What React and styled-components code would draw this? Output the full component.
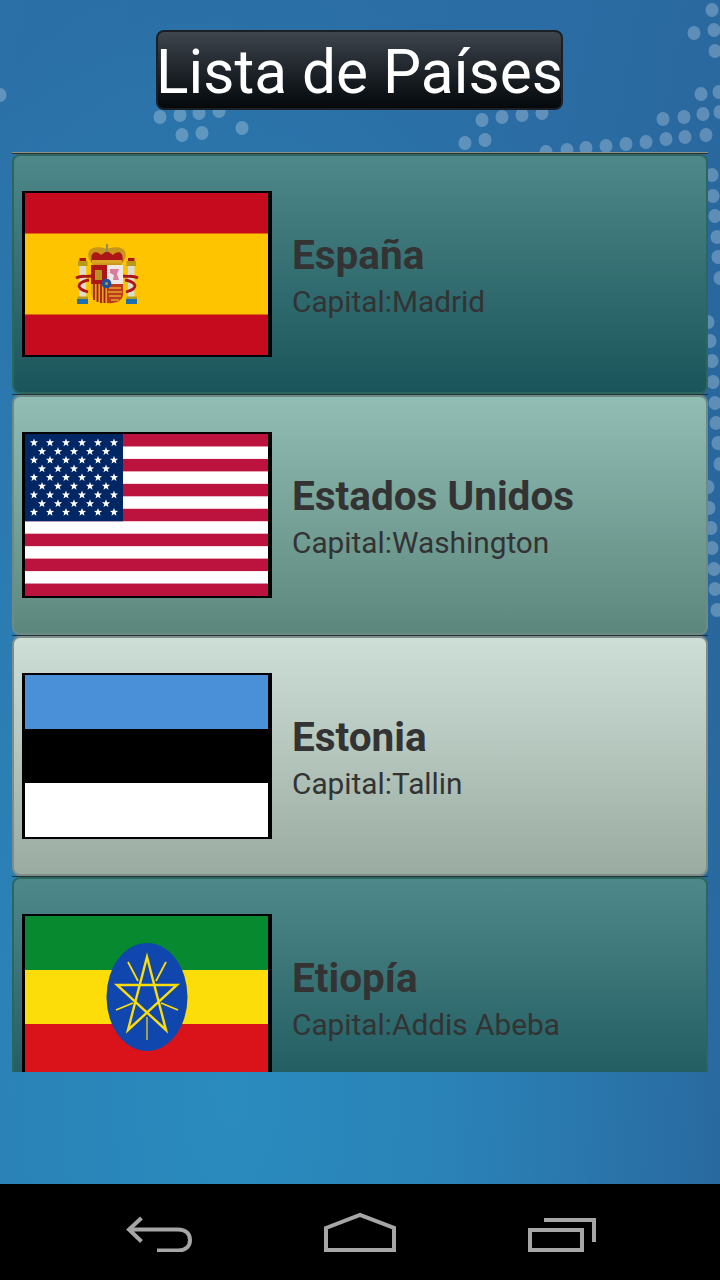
import React from "react";
import styled, { createGlobalStyle } from "styled-components";

const Global = createGlobalStyle`
  html, body { margin: 0; padding: 0; background: #000; }
  body { font-family: Roboto, "Liberation Sans", sans-serif; }
`;

const Page = styled.div`
  position: relative;
  width: 720px;
  height: 1280px;
  display: flex;
  flex-direction: column;
  overflow: hidden;
`;

const Screen = styled.main`
  position: relative;
  height: 1184px;
  display: flex;
  flex-direction: column;
  align-items: center;
  padding-top: 30px;
  box-sizing: border-box;
  background:
    radial-gradient(ellipse 540px 1150px at 230px 1090px, #2a8bbe 0%, #2a84b8 35%, rgba(42, 110, 165, 0) 100%),
    linear-gradient(100deg, #2b70a7 0%, #2a6ca3 60%, #28659c 100%);
`;

const Dots = styled.svg`
  position: absolute;
  inset: 0;
`;

const Title = styled.h1`
  position: relative;
  margin: 0 1px 0 0;
  width: 407px;
  height: 80px;
  padding-top: 3px;
  box-sizing: border-box;
  border: 2px solid #1b2026;
  border-radius: 8px;
  background: linear-gradient(#40464e 0%, #2b3138 30%, #14191e 70%, #04090c 100%);
  color: #fff;
  font-size: 60.4px;
  font-weight: 400;
  line-height: 76px;
  text-align: center;
  text-indent: -2px;
  white-space: nowrap;
`;

const List = styled.section`
  position: relative;
  width: 696px;
  height: 920px;
  margin-top: 42px;
  flex: none;
  overflow: hidden;
  border-top: 1px solid #8d9484;
  box-sizing: border-box;
`;

const Item = styled.article`
  border-top: 1px solid #24333a;
  height: 241px;
  box-sizing: border-box;
`;

const tones = {
  deep: { top: "#4f888a", bottom: "#19555a", edge: "#2b675f" },
  mid: { top: "#92bdb4", bottom: "#5c877d", edge: "#6e8a85" },
  pale: { top: "#cddfd7", bottom: "#9aaba1", edge: "#7f8d89" },
};

const Card = styled.div`
  height: 240px;
  box-sizing: border-box;
  display: flex;
  align-items: center;
  padding-left: 8px;
  border: 2px solid ${(p) => tones[p.$tone].edge};
  border-radius: 8px;
  background: linear-gradient(${(p) => tones[p.$tone].top}, ${(p) => tones[p.$tone].bottom});
`;

const FlagFrame = styled.div`
  flex: none;
  width: 250px;
  height: 166px;
  box-sizing: border-box;
  border-style: solid;
  border-color: #000;
  border-width: 2px 4px 2px 3px;
  background: #fff;
  display: flex;
  flex-direction: column;
  svg { display: block; }
`;

const Band = styled.div`
  flex: 1;
  background: ${(p) => p.$color};
`;

const Info = styled.div`
  margin-left: 20px;
  padding-top: 2px;
  display: flex;
  flex-direction: column;
  gap: 5px;
  color: #333;
`;

const Name = styled.h2`
  margin: 0;
  font-size: 40.5px;
  line-height: 47px;
  font-weight: 700;
`;

const Capital = styled.p`
  margin: 0;
  font-size: 29.8px;
  line-height: 35px;
  font-weight: 400;
`;

const NavBar = styled.nav`
  height: 96px;
  background: #000;
  display: flex;
  align-items: center;
  justify-content: center;
  gap: 132px;
  padding-left: 2px;
`;

const NavIcon = styled.svg`
  fill: none;
  stroke: #a6a6a6;
  stroke-width: 4;
`;

const dotList = [
  [160,117],[180,115],[199,113],[219,111],[182,135],[202,133],[242,128],
  [482,120],[502,117],[522,115],[542,113],[465,143],[485,140],
  [663,119],[684,117],[703,114],[720,112],[685,137],[706,135],[666,139],[646,142],[626,144],[606,146],[586,148],[567,150],[546,152],
  [701,94],[719,92],[0,95],[712,10],[694,33],[714,30],[715,51],
  [712,175],[713,196],[715,216],[717,237],[718,257],[720,278],
  [708,322],[710,341],[712,361],[713,382],[715,403],[716,423],[718,443],[720,464],
  [708,487],[709,508],[711,528],[712,548],[714,569],[715,589],[717,610],
];

const Backdrop = () => (
  <Dots width="720" height="1184" viewBox="0 0 720 1184">
    {dotList.map(([x, y]) => (
      <ellipse key={`${x}-${y}`} cx={x} cy={y} rx="6.5" ry="7" fill="#fff" opacity="0.25" />
    ))}
  </Dots>
);

const SpainFlag = () => (
  <svg width="243" height="162" viewBox="0 0 243 162">
    <rect width="243" height="162" fill="#c60b1e" />
    <rect y="40.5" width="243" height="81" fill="#ffc400" />
    <filter id="soft"><feGaussianBlur stdDeviation="0.4" /></filter>
    <g filter="url(#soft)">
      <path d="M64 66 C60 54 72 52 82 56 C92 52 104 54 100 66 L96 72 H68 Z" fill="#c8951a" />
      <path d="M67 70 C64 58 72 57 76 62 L82 58 L88 62 C92 57 100 58 97 70 Z" fill="#ad1519" />
      <rect x="67" y="67" width="30" height="3.5" fill="#d9a520" />
      <rect x="81" y="51" width="2" height="8" fill="#8d8d60" />
      <rect x="54.5" y="70" width="6.5" height="34" fill="#dcdcd4" />
      <rect x="103" y="70" width="6.5" height="34" fill="#dcdcd4" />
      <rect x="53" y="68" width="9.5" height="5" fill="#b89a18" />
      <rect x="101.5" y="68" width="9.5" height="5" fill="#b89a18" />
      <rect x="54.5" y="65" width="6.5" height="3" fill="#ad1519" />
      <rect x="103" y="65" width="6.5" height="3" fill="#ad1519" />
      <rect x="52.5" y="103.5" width="10.5" height="3" fill="#b89a18" />
      <rect x="101.5" y="103.5" width="10.5" height="3" fill="#b89a18" />
      <rect x="52" y="106" width="11" height="5" fill="#1a6fb0" />
      <rect x="101" y="106" width="11" height="5" fill="#1a6fb0" />
      <path d="M51 85 C56 82 60 84 66 83 M64 87 C53 89 49 95 63 99 M98 83 C104 84 108 82 113 85 M100 87 C111 89 115 95 101 99" fill="none" stroke="#ad1519" strokeWidth="2.8" />
      <path d="M66 72 H82 V91 H66 Z" fill="#ad1519" />
      <path d="M82 72 H98 V91 H82 Z" fill="#eee7e4" />
      <path d="M85 76 H94 L92 81 L94 87 H88 L89 82 L85 80 Z" fill="#d87ba0" />
      <path d="M70 77 H77 V87 H70 Z" fill="#b8921c" />
      <path d="M66 91 H82 V110 C74 111 66 107 66 99 Z" fill="#d9a520" />
      <path d="M69 91 V107 M72.5 91 V109 M76 91 V110 M79.5 91 V110" stroke="#ad1519" strokeWidth="1.7" fill="none" />
      <path d="M82 91 H98 V101 C98 108 90 111 82 110 Z" fill="#c1381c" />
      <path d="M84 95 H96 M83 99 H97 M84 103 H96 M86 107 H94" stroke="#dea72a" strokeWidth="1.4" fill="none" />
      <ellipse cx="81.5" cy="90.5" rx="4.8" ry="4.8" fill="#1f4f9e" />
      <circle cx="81.5" cy="90.5" r="1.5" fill="#c9a020" />
    </g>
  </svg>
);

const starPath = (cx, cy, r) => {
  const pts = [];
  for (let i = 0; i < 10; i++) {
    const rad = i % 2 === 0 ? r : r * 0.42;
    const a = -Math.PI / 2 + (i * Math.PI) / 5;
    pts.push(`${(cx + rad * Math.cos(a)).toFixed(2)},${(cy + rad * Math.sin(a)).toFixed(2)}`);
  }
  return pts.join(" ");
};

const UsaFlag = () => {
  const stripe = 162 / 13;
  const stars = [];
  for (let row = 0; row < 9; row++) {
    const odd = row % 2 === 1;
    for (let col = 0; col < (odd ? 5 : 6); col++) {
      stars.push([9 + (odd ? 8 : 0) + col * 16, 8.7 + row * 8.7]);
    }
  }
  return (
    <svg width="243" height="162" viewBox="0 0 243 162">
      <rect width="243" height="162" fill="#fff" />
      {Array.from({ length: 7 }, (_, i) => (
        <rect key={i} y={i * 2 * stripe} width="243" height={stripe} fill="#bb133e" />
      ))}
      <rect width="98" height={stripe * 7} fill="#002664" />
      {stars.map(([x, y]) => (
        <polygon key={`${x}-${y}`} points={starPath(x, y, 4.3)} fill="#fff" />
      ))}
    </svg>
  );
};

const EthiopiaFlag = () => (
  <svg width="243" height="162" viewBox="0 0 243 162">
    <rect width="243" height="54" fill="#078930" />
    <rect y="54" width="243" height="54" fill="#fcdd09" />
    <rect y="108" width="243" height="54" fill="#da121a" />
    <ellipse cx="122" cy="81" rx="40.5" ry="54" fill="#0f47af" />
    <polygon
      points="122,41 141,114 92,69 152,69 103,114"
      fill="none"
      stroke="#fcdd09"
      strokeWidth="2.4"
      strokeLinejoin="miter"
    />
    <path d="M103 46 L113 65 M141 46 L131 65 M91 94 L108 87 M153 94 L136 87" stroke="#fcdd09" strokeWidth="1.8" fill="none" />
    <path d="M122 101 V124" stroke="#a0a050" strokeWidth="2" fill="none" />
  </svg>
);

const countries = [
  { name: "España", capital: "Madrid", tone: "deep", flag: <SpainFlag /> },
  { name: "Estados Unidos", capital: "Washington", tone: "mid", flag: <UsaFlag /> },
  {
    name: "Estonia",
    capital: "Tallin",
    tone: "pale",
    flag: (
      <>
        <Band $color="#4a90d9" />
        <Band $color="#000" />
        <Band $color="#fff" />
      </>
    ),
  },
  { name: "Etiopía", capital: "Addis Abeba", tone: "deep", flag: <EthiopiaFlag /> },
];

export default function App() {
  return (
    <Page>
      <Global />
      <Screen>
        <Backdrop />
        <Title>Lista de Países</Title>
        <List>
          {countries.map((c) => (
            <Item key={c.name}>
              <Card $tone={c.tone}>
                <FlagFrame>{c.flag}</FlagFrame>
                <Info>
                  <Name>{c.name}</Name>
                  <Capital>Capital:{c.capital}</Capital>
                </Info>
              </Card>
            </Item>
          ))}
        </List>
      </Screen>
      <NavBar>
        <NavIcon width="66" height="40" viewBox="0 0 66 40">
          <path d="M15.5 6 L3 17.5 L15.5 29.5 M3 17.5 H52 C60 17.5 64 22 64 28 C64 34 60 38.5 52 38.5 H31" />
        </NavIcon>
        <NavIcon width="72" height="40" viewBox="0 0 72 40">
          <path d="M2 16 L36 3 L70 16 V38 H2 Z" />
        </NavIcon>
        <NavIcon width="68" height="40" viewBox="0 0 68 40">
          <rect x="2" y="18" width="52" height="20" />
          <path d="M16 8 H66 V30" />
        </NavIcon>
      </NavBar>
    </Page>
  );
}
